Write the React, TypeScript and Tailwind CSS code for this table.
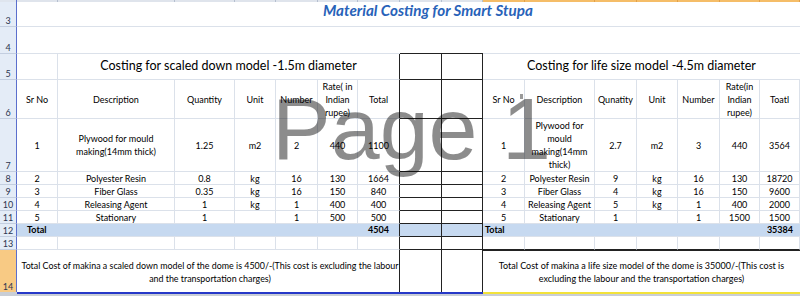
import type { ReactNode } from "react";

// plain gridline cell, dark-bordered "Total" column edge, and the bordered middle columns
const cell =
  "flex items-center justify-center text-center leading-[13px] border-r border-b border-r-[#dbe1ea] border-b-[#dbe1ea]";
const cellEdge =
  "flex items-center justify-center text-center leading-[13px] border-r border-b border-r-[#222] border-b-[#dbe1ea]";
const mid = "border-r border-b border-r-[#222] border-b-[#222]";

function RowNum({ n, active }: { n?: number; active?: boolean }) {
  return (
    <div
      className={
        active
          ? "flex items-end justify-center pb-px bg-[#f8ca84] border-r border-r-[#5b6fcd] text-[9px] leading-none text-[#2b3550]"
          : "flex items-end justify-center pb-px bg-[#e4ecf7] border-r border-b border-r-[#5b6fcd] border-b-[#c3cee0] text-[9px] leading-none text-[#2b3550]"
      }
    >
      {n}
    </div>
  );
}

function Row({ n, left, right }: { n: number; left: ReactNode[]; right: ReactNode[] }) {
  return (
    <>
      <RowNum n={n} />
      {left.map((v, i) => (
        <div key={"l" + i} className={i === 6 ? cellEdge : cell}>
          {v}
        </div>
      ))}
      <div className={mid} />
      <div className={mid} />
      {right.map((v, i) => (
        <div key={"r" + i} className={cell}>
          {v}
        </div>
      ))}
    </>
  );
}

const leftRows = [
  ["2", "Polyester Resin", "0.8", "kg", "16", "130", "1664"],
  ["3", "Fiber Glass", "0.35", "kg", "16", "150", "840"],
  ["4", "Releasing Agent", "1", "kg", "1", "400", "400"],
  ["5", "Stationary", "1", "", "1", "500", "500"],
];

const rightRows = [
  ["2", "Polyester Resin", "9", "kg", "16", "130", "18720"],
  ["3", "Fiber Glass", "4", "kg", "16", "150", "9600"],
  ["4", "Releasing Agent", "5", "kg", "1", "400", "2000"],
  ["5", "Stationary", "1", "", "1", "1500", "1500"],
];

export default function App() {
  return (
    <div className="relative w-[800px] h-[296px] overflow-hidden bg-white font-[Lato,sans-serif] text-[9px] text-black grid grid-cols-[17px_41px_117px_60px_41px_42px_40px_42px_42px_41px_42px_70px_42px_41px_42px_40px_40px] grid-rows-[2px_25px_27px_26px_39px_53px_13px_13px_13px_13px_13px_13px_42px_4px]">
      {/* column header strip */}
      <div className="bg-[#dfe5ee] border-r border-r-[#5b6fcd]" />
      {[...Array(9)].map((_, i) => (
        <div key={"g" + i} className="bg-[#dfe4ec] border-r border-r-[#b5bfcf]" />
      ))}
      {[...Array(7)].map((_, i) => (
        <div key={"o" + i} className="bg-[#f5bd68] border-r border-r-[#e2a048]" />
      ))}

      {/* row 3: title */}
      <RowNum n={3} />
      <div className="col-span-16 border-b border-b-[#dbe1ea] pl-[306px] text-[15.2px] font-bold italic leading-[16px] text-[#2862b9]">
        Material Costing for Smart Stupa
      </div>

      {/* row 4 */}
      <RowNum n={4} />
      <div className="col-span-7 border-b border-b-[#dbe1ea]" />
      <div className="col-span-2 border-b border-b-[#222]" />
      <div className="col-span-7 border-b border-b-[#dbe1ea]" />

      {/* row 5: section titles */}
      <RowNum n={5} />
      <div className={cell} />
      <div className="col-span-6 flex items-center justify-center border-r border-b border-r-[#222] border-b-[#dbe1ea] text-[12.5px]">
        Costing for scaled down model -1.5m diameter
      </div>
      <div className={mid} />
      <div className={mid} />
      <div className="col-span-7 flex items-center justify-center border-b border-b-[#dbe1ea] text-[12.5px]">
        Costing for life size model -4.5m diameter
      </div>

      {/* row 6: headers */}
      <Row
        n={6}
        left={[
          "Sr No",
          "Description",
          "Quantity",
          "Unit",
          "Number",
          <>
            Rate( in
            <br />
            Indian
            <br />
            rupee)
          </>,
          "Total",
        ]}
        right={[
          <span className="relative">
            Sr No
            <span className="absolute -right-[8px] top-[1px] h-[5px] w-[3px] bg-[#9a9a9a]" />
          </span>,
          "Description",
          "Qunatity",
          "Unit",
          "Number",
          <>
            Rate(in
            <br />
            Indian
            <br />
            rupee)
          </>,
          "Toatl",
        ]}
      />

      {/* row 7 */}
      <Row
        n={7}
        left={[
          "1",
          <>
            Plywood for mould
            <br />
            making(14mm thick)
          </>,
          "1.25",
          "m2",
          "2",
          "440",
          "1100",
        ]}
        right={[
          "1",
          <>
            Plywood for
            <br />
            mould
            <br />
            making(14mm
            <br />
            thick)
          </>,
          "2.7",
          "m2",
          "3",
          "440",
          "3564",
        ]}
      />

      {leftRows.map((r, i) => (
        <Row key={i} n={8 + i} left={r} right={rightRows[i]} />
      ))}

      {/* row 12: totals */}
      <RowNum n={12} />
      <div className="col-span-7 flex items-center justify-between bg-[#c6d9f0] border-r border-b border-r-[#222] border-b-[#dbe1ea] pl-[10px] pr-[10px] font-bold">
        <span>Total</span>
        <span>4504</span>
      </div>
      <div className={mid + " bg-[#c6d9f0]"} />
      <div className={mid + " bg-[#c6d9f0]"} />
      <div className="col-span-7 flex items-center justify-between bg-[#c6d9f0] border-b border-b-[#dbe1ea] pl-[2px] pr-[7px] font-bold">
        <span>Total</span>
        <span>35384</span>
      </div>

      {/* row 13 */}
      <RowNum n={13} />
      {[...Array(6)].map((_, i) => (
        <div key={"e" + i} className={cell} />
      ))}
      <div className={cellEdge} />
      <div className={mid} />
      <div className={mid} />
      {[...Array(7)].map((_, i) => (
        <div key={"f" + i} className="border-r border-b border-r-[#dbe1ea] border-b-[#222]" />
      ))}

      {/* row 14: notes */}
      <RowNum n={14} active />
      <div className="col-span-7 flex items-center justify-center text-center leading-[13px] whitespace-nowrap border-r border-r-[#222] pl-[4px] pt-[2px] text-[8.9px]">
        <p>
          Total Cost of makina a scaled down model of the dome is 4500/-(This cost is excluding the labour
          <br />
          and the transportation charges)
        </p>
      </div>
      <div className="border-r border-r-[#222]" />
      <div className="border-r border-r-[#222]" />
      <div className="col-span-7 flex items-center justify-center text-center leading-[13px] whitespace-nowrap border-t border-t-[#222] text-[9px]">
        <p>
          Total Cost of makina a life size model of the dome is 35000/-(This cost is
          <br />
          excluding the labour and the transportation charges)
        </p>
      </div>

      {/* bottom edge */}
      <div className="bg-[#c9ced6]" />
      <div className="col-span-9 bg-[#c9ced6] border-t-2 border-t-[#2638c8]" />
      <div className="col-span-7 bg-[#c9ced6] border-t-2 border-t-[#f2e23a]" />

      {/* page break preview watermark */}
      <div className="pointer-events-none absolute left-[272px] top-[85px] whitespace-nowrap font-['Liberation_Sans',Arial,sans-serif] text-[88px] leading-none text-black/45">
        Page 1
      </div>
    </div>
  );
}
